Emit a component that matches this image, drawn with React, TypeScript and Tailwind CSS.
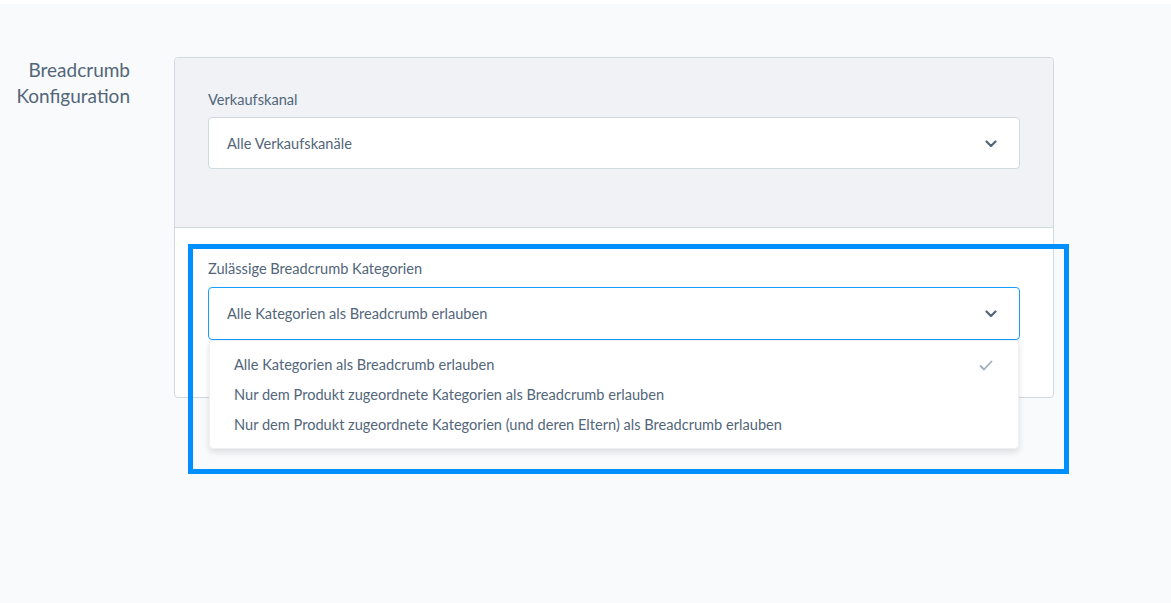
import React from 'react';

const font = { fontFamily: '"Source Sans Pro", Lato, "Noto Sans", sans-serif' };

const Chevron = () => (
  <svg width="12" height="8" viewBox="0 0 12 8" fill="none">
    <path d="M1.5 1.5 6 6l4.5-4.5" stroke="#52667a" strokeWidth="2.2" strokeLinecap="round" strokeLinejoin="round" />
  </svg>
);

const Check = () => (
  <svg width="14" height="11" viewBox="0 0 14 11" fill="none">
    <path d="M1.5 6 5 9.5l7.5-8" stroke="#a4afbd" strokeWidth="1.8" strokeLinecap="round" strokeLinejoin="round" />
  </svg>
);

const options = [
  'Alle Kategorien als Breadcrumb erlauben',
  'Nur dem Produkt zugeordnete Kategorien als Breadcrumb erlauben',
  'Nur dem Produkt zugeordnete Kategorien (und deren Eltern) als Breadcrumb erlauben',
];

export default function App() {
  return (
    <div className="w-[1171px] h-[603px] bg-[#f9fafb] border-t-4 border-white overflow-hidden" style={font}>
      <div className="flex pt-[53px] relative">
        <div className="w-[130px] text-right text-[19px] leading-[26px] text-[#52667a]">
          Breadcrumb
          <br />
          Konfiguration
        </div>
        <div className="ml-[44px] w-[880px] border border-[#d1d9e0] rounded-[4px] bg-white relative">
          <div className="bg-[#f0f2f5] border-b border-[#d1d9e0] pt-8 pb-[58px] px-[33px] rounded-t-[4px]">
            <div className="text-[14.6px] leading-5 text-[#52667a] mb-[7px]">Verkaufskanal</div>
            <div className="h-[52px] bg-white border border-[#d1d9e0] rounded-[4px] flex items-center justify-between pl-[18px] pr-[22px] pt-px">
              <span className="text-[14.6px] text-[#52667a]">Alle Verkaufskanäle</span>
              <Chevron />
            </div>
          </div>
          <div className="pt-[31px] pb-[57px] px-[33px]">
            <div className="text-[14.6px] leading-5 text-[#52667a] mb-2">Zulässige Breadcrumb Kategorien</div>
            <div className="relative">
              <div className="h-[53px] bg-white border border-[#189eff] rounded-[4px] flex items-center justify-between pl-[18px] pr-[22px]">
                <span className="text-[14.6px] text-[#52667a]">Alle Kategorien als Breadcrumb erlauben</span>
                <Chevron />
              </div>
              <div className="absolute left-px right-px top-[53px] z-10 bg-white rounded-b-[4px] shadow-[0_3px_6px_rgba(0,0,0,0.12)] border border-[#eef0f3] pt-[9px] pb-[8px]">
                {options.map((o, i) => (
                  <div key={o} className="h-[30px] flex items-center justify-between pl-[24px] pr-[25px] text-[14.6px] text-[#52667a]">
                    <span>{o}</span>
                    {i === 0 && <Check />}
                  </div>
                ))}
              </div>
            </div>
          </div>
        </div>
        <div className="absolute left-[188px] top-[240px] w-[881px] h-[230px] border-[5px] border-[#008fff] z-20 pointer-events-none" />
      </div>
    </div>
  );
}
